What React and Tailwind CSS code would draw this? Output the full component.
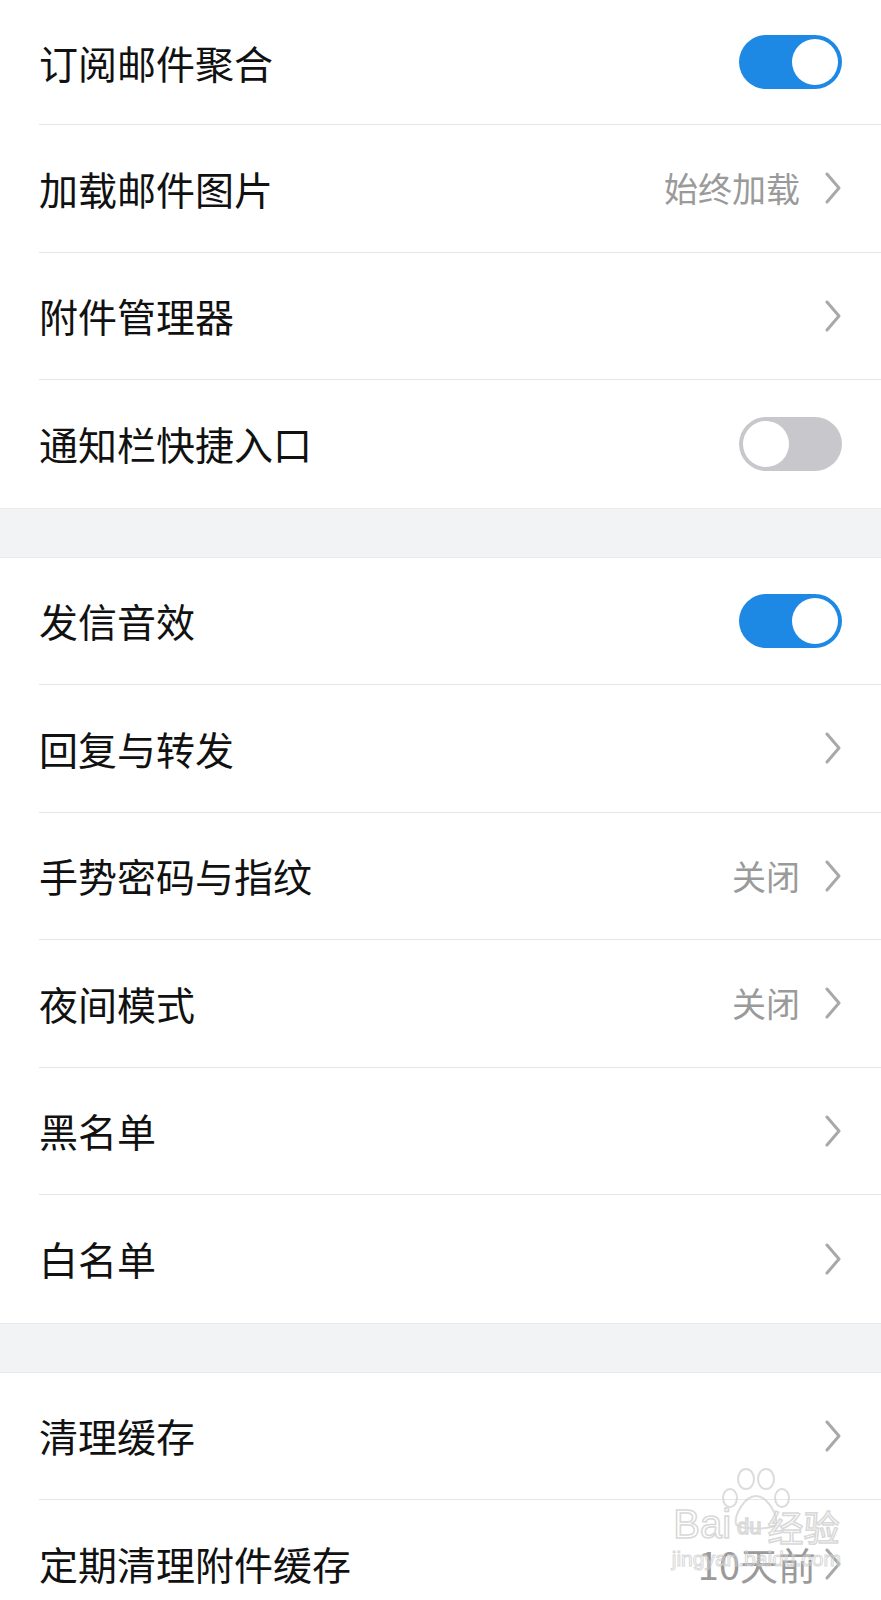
import React from 'react';

const sections = [
  [
    { label: '订阅邮件聚合', type: 'toggle', on: true },
    { label: '加载邮件图片', type: 'link', value: '始终加载' },
    { label: '附件管理器', type: 'link' },
    { label: '通知栏快捷入口', type: 'toggle', on: false },
  ],
  [
    { label: '发信音效', type: 'toggle', on: true },
    { label: '回复与转发', type: 'link' },
    { label: '手势密码与指纹', type: 'link', value: '关闭' },
    { label: '夜间模式', type: 'link', value: '关闭' },
    { label: '黑名单', type: 'link' },
    { label: '白名单', type: 'link' },
  ],
  [
    { label: '清理缓存', type: 'link' },
    { label: '定期清理附件缓存', type: 'link', value: '10天前', watermark: true },
  ],
];

const font = { fontFamily: '"Noto Sans CJK SC", "Noto Sans", sans-serif' };

const Toggle = ({ on }) => (
  <div
    className={`flex items-center w-[103px] h-[54px] rounded-full px-[4px] ${
      on ? 'bg-[#1e88e5] justify-end' : 'bg-[#c8c8cc] justify-start'
    }`}
  >
    <div className="w-[46px] h-[46px] rounded-full bg-white" />
  </div>
);

const Chevron = () => (
  <svg width="18" height="32" viewBox="0 0 18 32" fill="none" className="shrink-0">
    <path d="M3 2 L15 16 L3 30" stroke="#a8a8a8" strokeWidth="3" strokeLinecap="round" strokeLinejoin="round" />
  </svg>
);

// faint Baidu jingyan watermark that sits over the last row
const Watermark = () => (
  <div className="absolute right-[40px] top-[-32px] flex flex-col items-center leading-none pointer-events-none opacity-80">
    <svg width="80" height="62" viewBox="0 0 80 62" fill="none" stroke="#d4d4d4" strokeWidth="2">
      <ellipse cx="30" cy="11" rx="8" ry="10" />
      <ellipse cx="50" cy="11" rx="8" ry="10" />
      <ellipse cx="14" cy="30" rx="7" ry="9" />
      <ellipse cx="66" cy="30" rx="7" ry="9" />
      <path d="M40 28 C28 28 18 48 20 56 C22 62 58 62 60 56 C62 48 52 28 40 28 Z" />
    </svg>
    <div
      className="flex items-end -mt-[26px] text-transparent [-webkit-text-stroke:1.5px_#cfcfcf]"
      style={{ fontFamily: '"Liberation Sans", sans-serif' }}
    >
      <span className="text-[40px]">Bai</span>
      <span className="text-[22px] mx-[6px] mb-[6px]">du</span>
      <span className="text-[36px]" style={font}>经验</span>
    </div>
    <span
      className="text-[21px] mt-[4px] text-transparent [-webkit-text-stroke:1px_#d0d0d0]"
      style={{ fontFamily: '"Liberation Sans", sans-serif' }}
    >
      jingyan.baidu.com
    </span>
  </div>
);

const Row = ({ item, first, last }) => (
  <div
    className={`relative flex items-center pr-[39px] ${first ? 'h-[125px]' : 'h-[127.5px]'} ${
      last ? '' : 'border-b border-[#e6e6e8]'
    }`}
  >
    <span className="flex-1 text-[39px] text-[#111111] leading-none">{item.label}</span>
    {item.type === 'toggle' ? (
      <Toggle on={item.on} />
    ) : (
      <div className={`flex items-center ${item.watermark ? 'gap-[8px]' : 'gap-[24px]'}`}>
        {item.value && (
          <span className={`${item.watermark ? 'text-[38px]' : 'text-[34px]'} text-[#9a9a9a] leading-none`}>
            {item.value}
          </span>
        )}
        <Chevron />
      </div>
    )}
    {item.watermark && <Watermark />}
  </div>
);

export default function App() {
  return (
    <div className="w-[881px] h-[1600px] overflow-hidden bg-white" style={font}>
      {sections.map((items, si) => (
        <React.Fragment key={si}>
          {si > 0 && <div className="h-[50px] bg-[#f2f3f5] border-y border-[#e9eaec]" />}
          <div className="bg-white pl-[39px]">
            {items.map((item, i) => (
              <Row key={i} item={item} first={si === 0 && i === 0} last={i === items.length - 1} />
            ))}
          </div>
        </React.Fragment>
      ))}
    </div>
  );
}
